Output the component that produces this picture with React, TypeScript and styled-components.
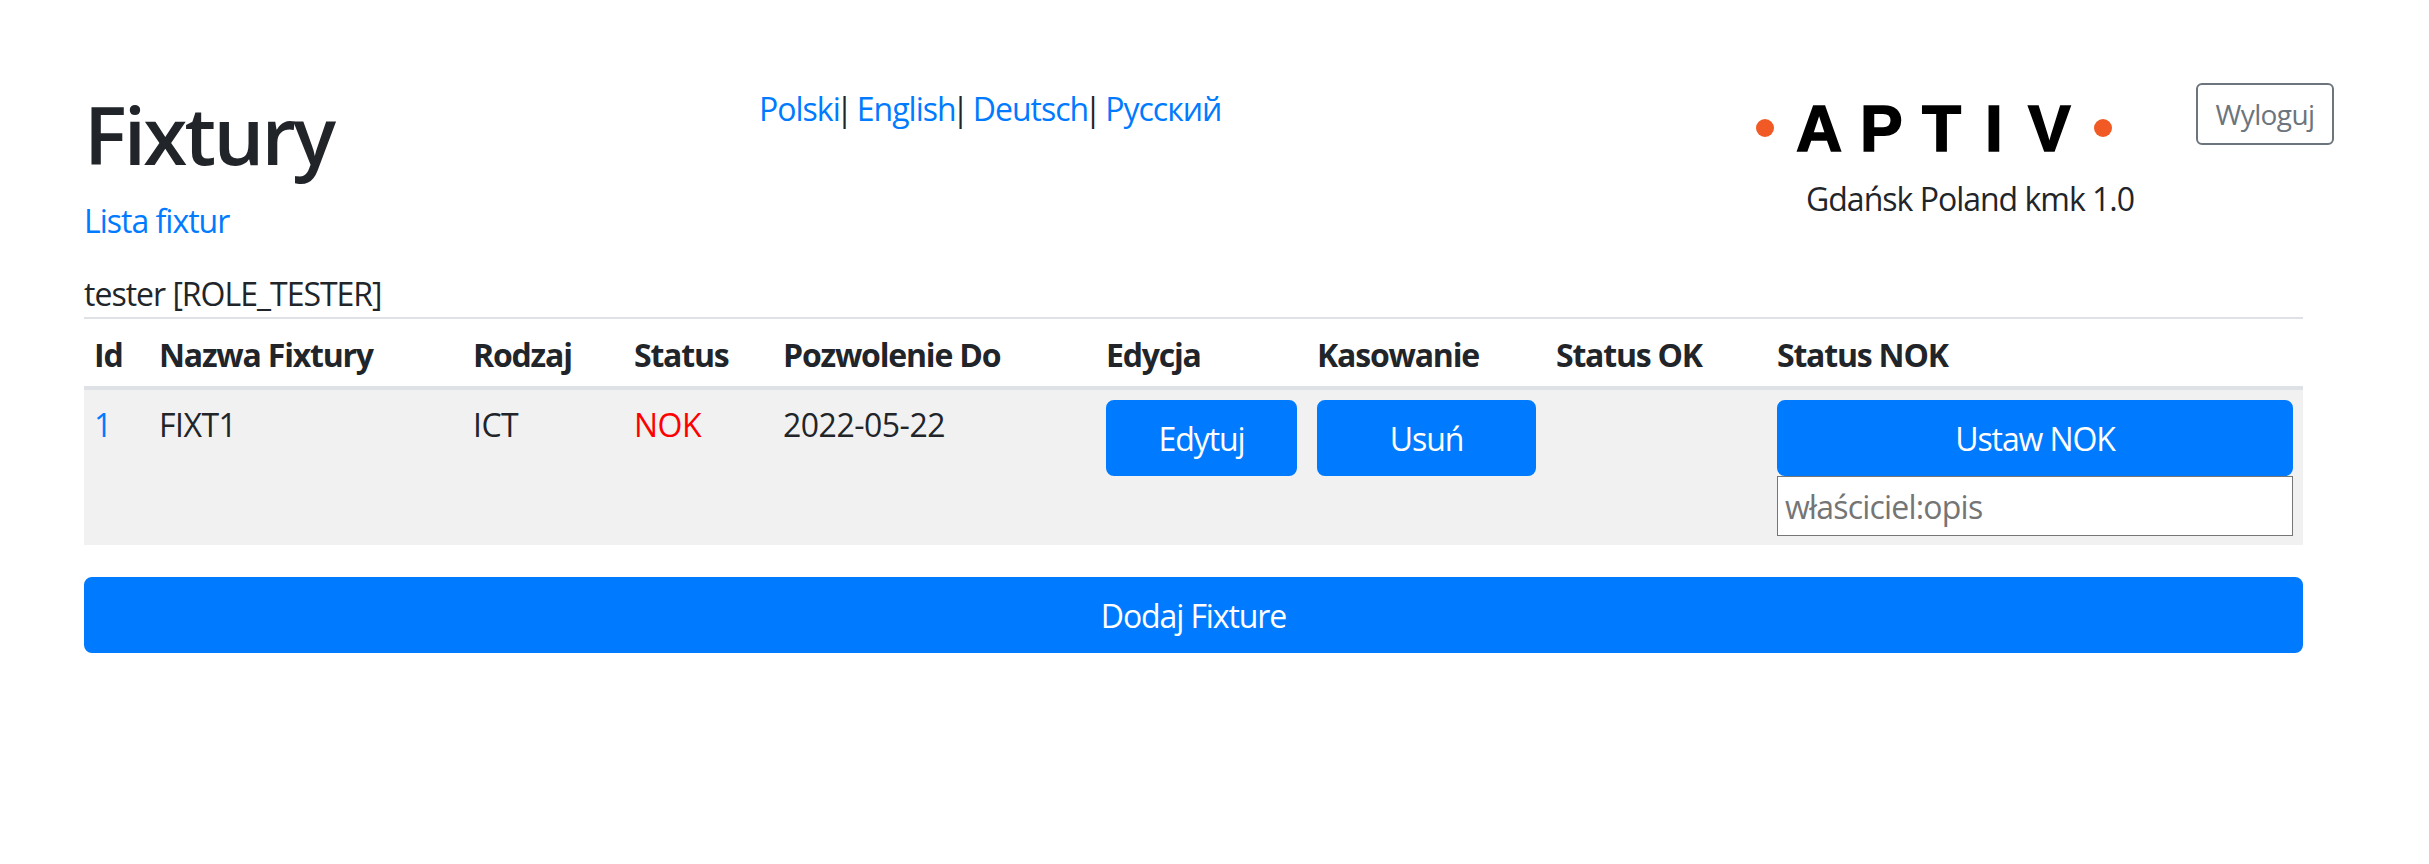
import React from 'react';
import styled, {createGlobalStyle} from 'styled-components';

const GlobalStyle = createGlobalStyle`
    html, body {
        margin: 0;
        padding: 0;
        background: #ffffff;
    }
    body {
        font-family: "Open Sans", "Noto Sans", sans-serif;
        font-size: 32px;
        line-height: 48px;
        color: #212529;
        letter-spacing: -1px;
    }
`;

const Page = styled.main`
    width: 2429px;
    box-sizing: border-box;
    padding: 0 126px 0 84px;
`;

const TopBar = styled.header`
    display: flex;
    align-items: flex-start;
    margin-right: -30px;
    height: 270px;
`;

const TitleColumn = styled.div`
    flex: none;
    width: 675px;
    padding-top: 86px;
`;

const Title = styled.h1`
    margin: 0 0 15px;
    font-size: 80px;
    line-height: 96px;
    font-weight: 600;
    letter-spacing: -2.8px;
`;

const Link = styled.a`
    color: #007bff;
    text-decoration: none;
`;

const LangBar = styled.nav`
    flex: none;
    width: 997px;
    padding-top: 85px;
`;

const Separator = styled.span`
    margin-left: -4px;
    letter-spacing: -2.4px;
`;

const LogoColumn = styled.div`
    flex: none;
    width: 440px;
    padding-top: 99px;
`;

const Logo = styled.svg`
    display: block;
    width: 360px;
    height: 56px;
`;

const Site = styled.div`
    margin: 20px 0 0 50px;
`;

const LogoutButton = styled.button`
    flex: none;
    margin-top: 83px;
    height: 62px;
    width: 138px;
    padding: 0;
    font: inherit;
    font-size: 28px;
    line-height: 42px;
    letter-spacing: -0.6px;
    color: #6c757d;
    background: transparent;
    border: 2px solid #6c757d;
    border-radius: 6px;
`;

const UserLine = styled.div`
    height: 47px;
`;

const Table = styled.table`
    width: 100%;
    table-layout: fixed;
    border-collapse: collapse;
`;

const Head = styled.th<{$width: number}>`
    width: ${p => p.$width}px;
    box-sizing: border-box;
    padding: 12px 10px 7px;
    text-align: left;
    vertical-align: top;
    font-weight: 700;
    letter-spacing: -1.2px;
    border-top: 2px solid #dee2e6;
    border-bottom: 4px solid #dee2e6;
`;

const Cell = styled.td`
    padding: 10px 10px 9px;
    vertical-align: top;
    line-height: 50px;
    letter-spacing: -0.5px;
    background: #f1f1f1;
`;

const NokText = styled(Cell)`
    color: #ff0000;
`;

const PrimaryButton = styled.button`
    display: block;
    width: 100%;
    height: 76px;
    padding: 2px 0 0;
    font: inherit;
    line-height: 48px;
    letter-spacing: -1.1px;
    color: #ffffff;
    background: #007bff;
    border: 2px solid #007bff;
    border-radius: 8px;
`;

const AddButton = styled(PrimaryButton)`
    margin-top: 32px;
`;

const ReasonInput = styled.input`
    display: block;
    width: 100%;
    height: 60px;
    box-sizing: border-box;
    padding: 0 7px;
    font: inherit;
    line-height: 48px;
    letter-spacing: -0.8px;
    color: #212529;
    background: #ffffff;
    border: 1px solid #767676;
    border-radius: 0;
    &::placeholder {
        color: #757575;
        opacity: 1;
    }
`;

const columns: [string, number][] = [
    ['Id', 65],
    ['Nazwa Fixtury', 314],
    ['Rodzaj', 161],
    ['Status', 149],
    ['Pozwolenie Do', 323],
    ['Edycja', 211],
    ['Kasowanie', 239],
    ['Status OK', 221],
    ['Status NOK', 536],
];

const langs = ['Polski', 'English', 'Deutsch', 'Русский'];

const App = () => (
    <Page>
        <GlobalStyle/>
        <TopBar>
            <TitleColumn>
                <Title>Fixtury</Title>
                <Link href="#">Lista fixtur</Link>
            </TitleColumn>
            <LangBar>
                {langs.map((lang, i) => (
                    <React.Fragment key={lang}>
                        <Link href="#">{lang}</Link>{i < langs.length - 1 ? <Separator>| </Separator> : null}
                    </React.Fragment>
                ))}
            </LangBar>
            <LogoColumn>
                <Logo viewBox="0 0 360 56" aria-label="APTIV">
                    <circle cx="9" cy="29" r="9" fill="#f15a24"/>
                    <circle cx="347" cy="29" r="9" fill="#f15a24"/>
                    <text
                        x="40 104 166 229 272"
                        y="52"
                        fontFamily="'Liberation Sans', sans-serif"
                        fontWeight="700"
                        fontSize="64"
                        letterSpacing="0"
                        stroke="#000"
                        strokeWidth="1.5"
                    >APTIV</text>
                </Logo>
                <Site>Gdańsk Poland kmk 1.0</Site>
            </LogoColumn>
            <LogoutButton>Wyloguj</LogoutButton>
        </TopBar>
        <UserLine>tester [ROLE_TESTER]</UserLine>
        <Table>
            <thead>
                <tr>
                    {columns.map(([name, width]) => (
                        <Head key={name} $width={width}>{name}</Head>
                    ))}
                </tr>
            </thead>
            <tbody>
                <tr>
                    <Cell><Link href="#">1</Link></Cell>
                    <Cell>FIXT1</Cell>
                    <Cell>ICT</Cell>
                    <NokText>NOK</NokText>
                    <Cell>2022-05-22</Cell>
                    <Cell><PrimaryButton>Edytuj</PrimaryButton></Cell>
                    <Cell><PrimaryButton>Usuń</PrimaryButton></Cell>
                    <Cell/>
                    <Cell>
                        <PrimaryButton>Ustaw NOK</PrimaryButton>
                        <ReasonInput placeholder="właściciel:opis"/>
                    </Cell>
                </tr>
            </tbody>
        </Table>
        <AddButton>Dodaj Fixture</AddButton>
    </Page>
);

export default App;
